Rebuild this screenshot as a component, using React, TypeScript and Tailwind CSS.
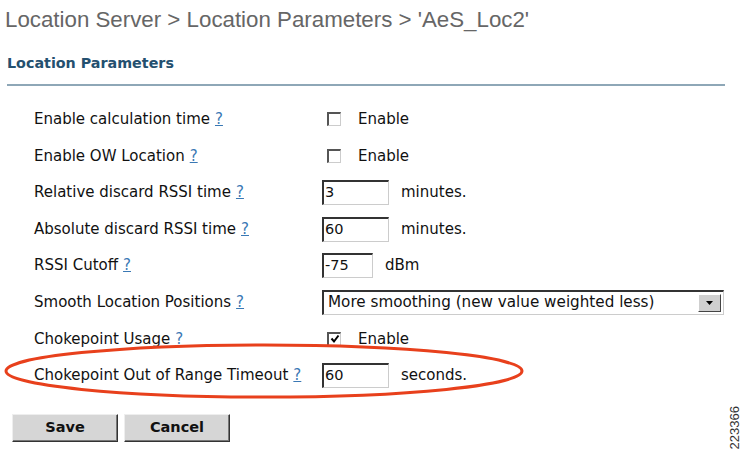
import React from 'react';

const labelFont = "font-['DejaVu_Sans',sans-serif]";

function Help() {
  return <span className="ml-[5px] text-[#3a78b4] underline">?</span>;
}

function Check({ checked }: { checked?: boolean }) {
  return (
    <span className="ml-[5px] mr-[17px] flex h-[14px] w-[14px] items-center justify-center border-t-2 border-l-2 border-b border-r border-t-[#555] border-l-[#555] border-b-[#ccc] border-r-[#ccc] bg-white">
      {checked && (
        <svg width="10" height="10" viewBox="0 0 10 10">
          <path d="M1.5 4.5 L4 7.5 L8.5 1.5" fill="none" stroke="#000" strokeWidth="2" />
        </svg>
      )}
    </span>
  );
}

function Box({ value, w = 'w-[67px]' }: { value: string; w?: string }) {
  return (
    <span className={`${w} flex h-[25px] items-center border-t-2 border-l-2 border-b border-r border-t-[#333] border-l-[#333] border-b-[#ccc] border-r-[#ccc] bg-white pl-[1px] text-[14.5px]`}>
      {value}
    </span>
  );
}

const rows: { label: string; control: React.ReactNode }[] = [
  { label: 'Enable calculation time', control: <><Check /><span>Enable</span></> },
  { label: 'Enable OW Location', control: <><Check /><span>Enable</span></> },
  { label: 'Relative discard RSSI time', control: <><Box value="3" /><span className="ml-[12px]">minutes.</span></> },
  { label: 'Absolute discard RSSI time', control: <><Box value="60" /><span className="ml-[12px]">minutes.</span></> },
  { label: 'RSSI Cutoff', control: <><Box value="-75" w="w-[51px]" /><span className="ml-[12px]">dBm</span></> },
  {
    label: 'Smooth Location Positions',
    control: (
      <span className="flex h-[25px] w-[402px] items-center justify-between border-t-2 border-l-2 border-b border-r border-t-[#333] border-l-[#333] border-b-[#ccc] border-r-[#ccc] bg-white pl-[4px] pr-[2px] text-[15.2px]">
        <span>More smoothing (new value weighted less)</span>
        <span className="flex h-[18px] w-[23px] items-center justify-center border border-b-[#444] border-r-[#444] border-t-white border-l-white bg-[#cfcfcf]">
          <svg width="7" height="4" viewBox="0 0 7 4"><path d="M0 0 H7 L3.5 4 Z" fill="#000" /></svg>
        </span>
      </span>
    ),
  },
  { label: 'Chokepoint Usage', control: <><Check checked /><span>Enable</span></> },
  { label: 'Chokepoint Out of Range Timeout', control: <><Box value="60" /><span className="ml-[12px]">seconds.</span></> },
];

export default function App() {
  return (
    <div className={`relative h-[449px] w-[744px] overflow-hidden bg-white text-[#111] ${labelFont}`}>
      <h1 className="pl-[5px] pt-[6px] font-['Liberation_Sans',Arial,sans-serif] text-[22.3px] leading-[28px] text-[#666]">
        Location Server &gt; Location Parameters &gt; 'AeS_Loc2'
      </h1>
      <div className="mx-[7px] mt-[19px] w-[718px] border-b-2 border-[#8ea7b7] pb-[10px]">
        <h2 className="text-[14.3px] font-bold text-[#24506f]">Location Parameters</h2>
      </div>
      <div className="mt-[14.5px] flex flex-col text-[15px]">
        {rows.map((r) => (
          <div key={r.label} className="flex h-[36.6px] items-center">
            <div className="w-[322px] pl-[34px]">
              {r.label}
              <Help />
            </div>
            <div className="flex items-center">{r.control}</div>
          </div>
        ))}
      </div>
      <div className="mt-[20.5px] flex items-start justify-between pl-[12px] pr-[2px]">
        <div className="flex gap-[6px]">
          <button className="h-[28px] w-[106px] border border-t-[#eee] border-l-[#eee] border-b-[#333] border-r-[#333] bg-[#d6d6d6] text-[14.5px] font-bold shadow-[inset_-1px_-1px_0_#777]">Save</button>
          <button className="h-[28px] w-[106px] border border-t-[#eee] border-l-[#eee] border-b-[#333] border-r-[#333] bg-[#d6d6d6] text-[14.5px] font-bold shadow-[inset_-1px_-1px_0_#777]">Cancel</button>
        </div>
        <span className="mt-[-8px] rotate-180 font-['Liberation_Sans',Arial,sans-serif] text-[13px] leading-[14px] text-[#333] [writing-mode:vertical-rl]">223366</span>
      </div>
      <svg className="pointer-events-none absolute left-0 top-0" width="744" height="449">
        <ellipse cx="264" cy="371" rx="258" ry="26" fill="none" stroke="#e8401c" strokeWidth="3" />
      </svg>
    </div>
  );
}
